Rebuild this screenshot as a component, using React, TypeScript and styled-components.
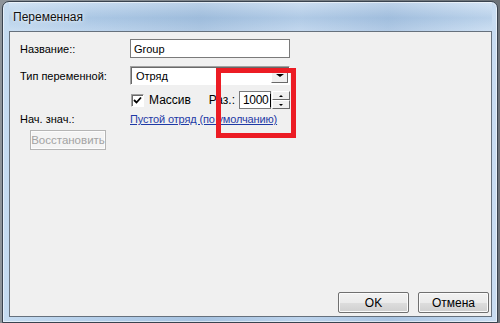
import styled, { createGlobalStyle } from "styled-components";

const GlobalStyle = createGlobalStyle`
  html, body {
    margin: 0;
    padding: 0;
    background: #7b8187;
    font-family: "Liberation Sans", Arial, sans-serif;
    font-size: 11px;
    color: #000;
  }
  #root {
    width: 500px;
    height: 323px;
    overflow: hidden;
  }
`;

const Page = styled.div`
  width: 500px;
  height: 323px;
  padding: 1px 0 0 2px;
  box-sizing: border-box;
  background: linear-gradient(90deg, #8e949a 0%, #6c7278 100%);
`;

const Window = styled.div`
  width: 496px;
  height: 322px;
  box-sizing: border-box;
  border: 1px solid #39434f;
  border-radius: 7px 7px 0 0;
  background: linear-gradient(
    90deg,
    #c6dcf1 0%,
    #b5cfea 18%,
    #a6c2e0 40%,
    #bcd3ec 60%,
    #a9c4e2 78%,
    #c9ddf2 100%
  );
  box-shadow: inset 0 0 0 1px rgba(255, 255, 255, 0.55);
  display: flex;
  flex-direction: column;
  padding: 0 5px 5px 6px;
`;

const TitleBar = styled.div`
  height: 29px;
  display: flex;
  align-items: center;
  padding-left: 4px;
  font-size: 12px;
  color: #111;
  text-shadow: 0 0 6px #eaf3fc, 0 0 3px #ffffff;
  background: linear-gradient(
    180deg,
    rgba(255, 255, 255, 0.25) 0%,
    rgba(120, 160, 200, 0.18) 55%,
    rgba(255, 255, 255, 0.1) 100%
  );
`;

const Panel = styled.div`
  flex: 1;
  background: #f0f0f0;
  border: 1px solid #66717d;
  display: flex;
  flex-direction: column;
  position: relative;
`;

const Form = styled.div`
  display: grid;
  grid-template-columns: 110px 160px;
  padding: 7px 0 0 10px;
  align-items: center;
`;

const Label = styled.div<{ $gap?: number }>`
  margin-top: ${(p) => p.$gap ?? 0}px;
  white-space: nowrap;
`;

const Cell = styled.div<{ $gap?: number }>`
  margin-top: ${(p) => p.$gap ?? 0}px;
  display: flex;
  align-items: center;
`;

const TextBox = styled.div<{ $w: number; $h: number }>`
  width: ${(p) => p.$w}px;
  height: ${(p) => p.$h}px;
  box-sizing: border-box;
  border: 1px solid #7a7a7a;
  background: #fff;
  display: flex;
  align-items: center;
  padding-left: 3px;
`;

const SelectBox = styled.div`
  width: 160px;
  height: 19px;
  box-sizing: border-box;
  border: 1px solid;
  border-color: #a0a0a0 #ffffff #ffffff #a0a0a0;
  box-shadow: inset 1px 1px 0 #696969;
  background: #fff;
  display: flex;
  align-items: center;
  padding: 1px 1px 1px 5px;
`;

const SelectText = styled.span`
  flex: 1;
`;

const DropButton = styled.div`
  width: 17px;
  height: 15px;
  box-sizing: border-box;
  background: #f0f0f0;
  border: 1px solid;
  border-color: #ffffff #696969 #696969 #ffffff;
  display: flex;
  align-items: center;
  justify-content: center;
`;

const Arrow = styled.div<{ $up?: boolean; $size: number }>`
  width: 0;
  height: 0;
  border-left: ${(p) => p.$size}px solid transparent;
  border-right: ${(p) => p.$size}px solid transparent;
  ${(p) =>
    p.$up
      ? `border-bottom: ${Math.ceil(p.$size / 2) + 1}px solid #000;`
      : `border-top: ${Math.ceil(p.$size / 2) + 1}px solid #000;`}
`;

const ArrayRow = styled.div`
  display: flex;
  align-items: center;
  width: 160px;
`;

const CheckBox = styled.div`
  width: 13px;
  height: 13px;
  box-sizing: border-box;
  margin-left: 1px;
  border: 1px solid;
  border-color: #a0a0a0 #ffffff #ffffff #a0a0a0;
  box-shadow: inset 1px 1px 0 #696969;
  background: #fff;
  display: flex;
  align-items: center;
  justify-content: center;
`;

const CheckText = styled.span`
  margin-left: 5px;
  font-size: 12px;
`;

const SizeLabel = styled.span`
  margin-left: auto;
  margin-right: 4px;
  font-size: 12px;
`;

const Spinner = styled.div`
  width: 18px;
  height: 18px;
  margin-left: 1px;
  display: flex;
  flex-direction: column;
`;

const SpinHalf = styled.div`
  flex: 1;
  box-sizing: border-box;
  border: 1px solid;
  border-color: #ffffff #696969 #696969 #ffffff;
  background: #f0f0f0;
  display: flex;
  align-items: center;
  justify-content: center;
`;

const NumberText = styled.span`
  font-size: 12px;
  letter-spacing: -0.3px;
`;

const Caret = styled.span`
  display: inline-block;
  width: 1px;
  height: 13px;
  background: #000;
  margin-left: 1px;
`;

const Link = styled.a`
  color: #1f3aa6;
  text-decoration: underline;
  white-space: nowrap;
  letter-spacing: -0.15px;
  cursor: pointer;
`;

const RestoreButton = styled.button`
  margin: 5px 0 0 20px;
  width: 76px;
  height: 20px;
  padding: 0;
  font-family: inherit;
  font-size: 11.5px;
  white-space: nowrap;
  overflow: hidden;
  color: #a3a3a3;
  background: #f4f4f4;
  border: 1px solid #b5b5b5;
  box-shadow: inset 0 0 0 1px #fcfcfc;
  border-radius: 0;
`;

const Footer = styled.div`
  margin-top: auto;
  display: flex;
  justify-content: flex-end;
  gap: 9px;
  padding: 0 2px 3px 0;
`;

const DialogButton = styled.button`
  width: 71px;
  height: 21px;
  padding: 0;
  font-family: inherit;
  font-size: 12px;
  color: #000;
  background: linear-gradient(180deg, #f2f2f2 0%, #ebebeb 50%, #dddddd 51%, #cfcfcf 100%);
  border: 1px solid #707070;
  border-radius: 2px;
  box-shadow: inset 0 0 0 1px #fbfbfb;
`;

const Highlight = styled.div`
  position: absolute;
  left: 206px;
  top: 36px;
  width: 80px;
  height: 70px;
  box-sizing: border-box;
  border: 5px solid #ec1c24;
  pointer-events: none;
`;

const App = () => {
  return (
    <>
      <GlobalStyle />
      <Page>
        <Window>
          <TitleBar>Переменная</TitleBar>
          <Panel>
            <Form>
              <Label>Название::</Label>
              <Cell>
                <TextBox $w={160} $h={19}>Group</TextBox>
              </Cell>

              <Label $gap={8}>Тип переменной:</Label>
              <Cell $gap={8}>
                <SelectBox>
                  <SelectText>Отряд</SelectText>
                  <DropButton>
                    <Arrow $size={4} />
                  </DropButton>
                </SelectBox>
              </Cell>

              <Label $gap={6} />
              <Cell $gap={6}>
                <ArrayRow>
                  <CheckBox>
                    <svg width="9" height="9" viewBox="0 0 9 9">
                      <path d="M1 4 L3.5 6.5 L8 1.5" fill="none" stroke="#000" strokeWidth="1.8" />
                    </svg>
                  </CheckBox>
                  <CheckText>Массив</CheckText>
                  <SizeLabel>Раз.:</SizeLabel>
                  <TextBox $w={32} $h={18}>
                    <NumberText>1000</NumberText>
                    <Caret />
                  </TextBox>
                  <Spinner>
                    <SpinHalf>
                      <Arrow $up $size={2} />
                    </SpinHalf>
                    <SpinHalf>
                      <Arrow $size={2} />
                    </SpinHalf>
                  </Spinner>
                </ArrayRow>
              </Cell>

              <Label $gap={4}>Нач. знач.:</Label>
              <Cell $gap={4}>
                <Link>Пустой отряд (по умолчанию)</Link>
              </Cell>
            </Form>
            <RestoreButton disabled>Восстановить</RestoreButton>
            <Footer>
              <DialogButton>OK</DialogButton>
              <DialogButton>Отмена</DialogButton>
            </Footer>
            <Highlight />
          </Panel>
        </Window>
      </Page>
    </>
  );
};

export default App;
